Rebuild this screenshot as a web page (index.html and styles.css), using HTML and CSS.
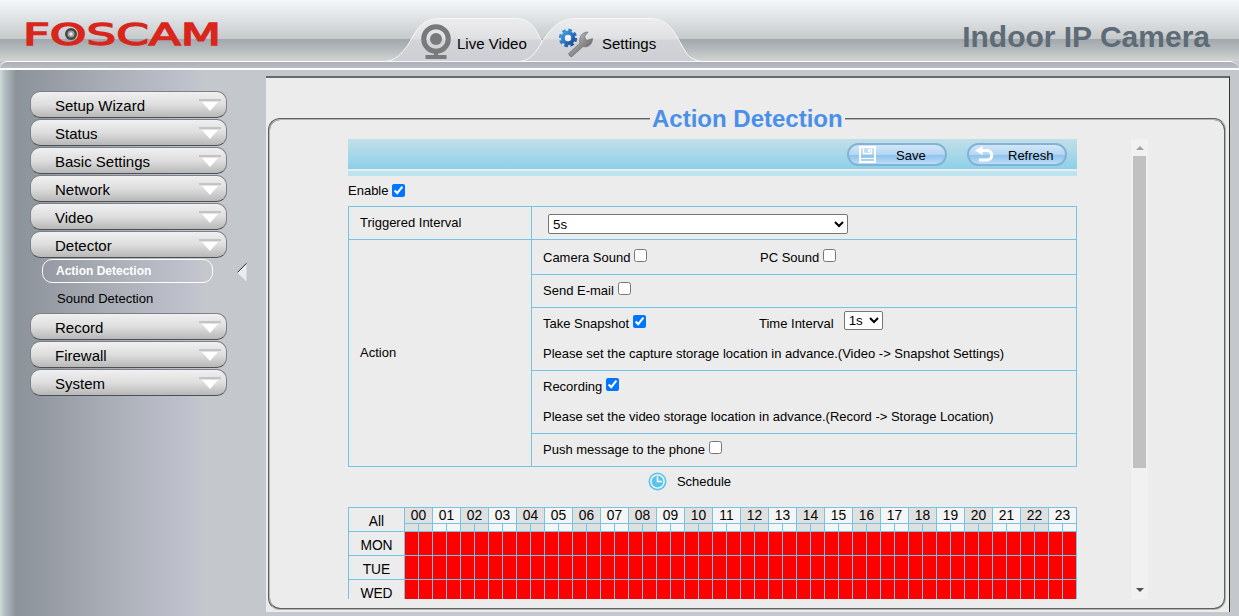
FILE: index.html
```html
<!DOCTYPE html>
<html lang="en">
<head>
<meta charset="UTF-8" />
<title>IPCam Client</title>
<link rel="stylesheet" href="styles.css">
</head>
<body>
<header class="header">
  <svg class="logo" width="210" height="42" viewBox="0 0 210 42" role="img" aria-label="FOSCAM">
    <text x="0" y="36" textLength="198" lengthAdjust="spacingAndGlyphs">FOSCAM</text>
    <circle cx="48" cy="25" r="6" fill="#444"/>
    <circle cx="48" cy="25" r="3.6" fill="#999"/>
    <circle cx="48" cy="25" r="1.8" fill="#e4e4e4"/>
  </svg>
  <nav class="tabs">
    <svg class="tab-shapes" width="320" height="44" viewBox="0 0 320 44">
      <defs>
        <linearGradient id="tabFill" x1="0" y1="0" x2="0" y2="1">
          <stop offset="0" stop-color="#ededee"/>
          <stop offset="0.47" stop-color="#dfe0e2"/>
          <stop offset="0.5" stop-color="#d2d4d8"/>
          <stop offset="1" stop-color="#cdcfd5"/>
        </linearGradient>
      </defs>
      <path d="M0 43.5C12 43 17 36 24 27C31 15 36 .5 56 .5H132C148 .5 153 14 157 22L170 43.5Z" fill="url(#tabFill)" stroke="#f5f7f8"/>
      <path d="M136 43.5C147 42 152 34 158 24C165 13 174 .5 192 .5H266C284 .5 290 13 297 26C302 35 305 42 318 43.5Z" fill="url(#tabFill)" stroke="#f5f7f8"/>
    </svg>
    <a class="tab tab-live">
      <svg width="30" height="36" viewBox="0 0 30 36">
        <circle cx="15" cy="15" r="12.3" fill="none" stroke="#77797b" stroke-width="5"/>
        <circle cx="15" cy="15" r="6" fill="#77797b"/>
        <path d="M13 28h4v3h8.500v4H4.500v-4h8.500z" fill="#77797b"/>
      </svg>
      <span>Live Video</span>
    </a>
    <a class="tab tab-settings">
      <svg width="36" height="30" viewBox="0 0 36 30">
        <defs>
          <linearGradient id="gear" x1="0" y1="0" x2="1" y2="1">
            <stop offset="0" stop-color="#3fa0e4"/>
            <stop offset="1" stop-color="#1d4c9c"/>
          </linearGradient>
          <linearGradient id="steel" x1="0" y1="0" x2="1" y2="1">
            <stop offset="0" stop-color="#d8d8d8"/>
            <stop offset="1" stop-color="#4a4a4a"/>
          </linearGradient>
        </defs>
        <circle cx="10" cy="10" r="7.700" fill="none" stroke="url(#gear)" stroke-width="3" stroke-dasharray="3.6 2.448"/>
        <circle cx="10" cy="10" r="5.2" fill="#f2f5f8" stroke="url(#gear)" stroke-width="4"/>
        <path d="M10.500 25.500L22 15C20.500 9 24 4 30 4L26.500 8.500L28.500 12.500L34.500 10.500C34.500 16 30 20 25 18.500L14 28.500Q11.500 29.500 10.500 25.500Z" fill="url(#steel)" stroke="#666" stroke-width=".6"/>
      </svg>
      <span>Settings</span>
    </a>
  </nav>
  <div class="product">Indoor IP Camera</div>
</header>
<div class="rail"></div>

<div class="body">
  <aside class="sidebar">
    <ul class="menu">
      <li class="menu-item">Setup Wizard</li>
      <li class="menu-item">Status</li>
      <li class="menu-item">Basic Settings</li>
      <li class="menu-item">Network</li>
      <li class="menu-item">Video</li>
      <li class="menu-item">Detector</li>
      <li class="submenu">
        <a class="sub-item selected">Action Detection</a>
        <a class="sub-item">Sound Detection</a>
      </li>
      <li class="menu-item">Record</li>
      <li class="menu-item">Firewall</li>
      <li class="menu-item">System</li>
    </ul>
    <svg class="pointer" width="10" height="19" viewBox="0 0 10 19">
      <path d="M9.500 0V18.500L0 9.500Z" fill="#ececec"/>
      <path d="M9.500 .3L.4 9.500" stroke="#222" fill="none"/>
    </svg>
  </aside>

  <main class="content">
    <fieldset class="panel">
      <legend>Action Detection</legend>
      <div class="scroller">
        <div class="page">
          <div class="toolbar">
            <button class="tool">
              <svg width="17" height="17" viewBox="0 0 17 17" fill="none" stroke="#fff">
                <path d="M1 1H16V16H1Z" stroke-width="2"/>
                <path d="M4.500 1.500V7.500H12.500V1.500" stroke-width="1.300"/>
                <path d="M10 3V6" stroke-width="2"/>
                <path d="M2 12.500H15" stroke-width="1"/>
              </svg>
              <span>Save</span>
            </button>
            <button class="tool refresh">
              <svg width="19" height="17" viewBox="0 0 19 17">
                <path d="M5 4.500H12A4.700 4.700 0 0 1 12 14H4" fill="none" stroke="#fff" stroke-width="3"/>
                <path d="M0 4.500L7.500 0V9Z" fill="#fff"/>
              </svg>
              <span>Refresh</span>
            </button>
          </div>
          <div class="strip"></div>
          <label class="enable">Enable <input type="checkbox" checked></label>

          <div class="settings">
            <div class="name">Triggered Interval</div>
            <div class="cell interval">
              <select class="long"><option>5s</option></select>
            </div>
            <div class="name action-name">Action</div>
            <div class="cell sound">
              <label class="left">Camera Sound <input type="checkbox"></label>
              <label>PC Sound <input type="checkbox"></label>
            </div>
            <div class="cell"><label>Send E-mail <input type="checkbox"></label></div>
            <div class="cell tall">
              <div class="line">
                <label class="left snap">Take Snapshot <input type="checkbox" checked></label>
                <span>Time Interval</span>
                <select class="short"><option>1s</option></select>
              </div>
              <div class="line">Please set the capture storage location in advance.(Video -&gt; Snapshot Settings)</div>
            </div>
            <div class="cell tall">
              <div class="line"><label>Recording <input type="checkbox" checked></label></div>
              <div class="line">Please set the video storage location in advance.(Record -&gt; Storage Location)</div>
            </div>
            <div class="cell"><label>Push message to the phone <input type="checkbox"></label></div>
          </div>

          <div class="schedule-title">
            <svg width="19" height="19" viewBox="0 0 19 19">
              <circle cx="9.500" cy="9.500" r="9" fill="#5bc4ea"/>
              <circle cx="9.500" cy="9.500" r="6.600" fill="none" stroke="#fff" stroke-width="1.300"/>
              <path d="M9.500 4.500V9.500H14" fill="none" stroke="#fff" stroke-width="1.500"/>
            </svg>
            <span>Schedule</span>
          </div>
          <div class="schedule" id="schedule"></div>
        </div>
        <div class="scrollbar">
          <i class="up"></i>
          <div class="thumb"></div>
          <i class="down"></i>
        </div>
      </div>
    </fieldset>
  </main>
</div>

<script>
  (function(){
    const schedule = document.getElementById('schedule');
    const days = ['MON', 'TUE', 'WED'];

    function add(parent, cls, text) {
      const el = document.createElement('div');
      el.className = cls;
      if (text) el.textContent = text;
      parent.appendChild(el);
      return el;
    }

    // Header: one column per hour, split in two half hours
    add(schedule, 'day', 'All');
    for (let h = 0; h < 24; h++) {
      const hour = add(schedule, 'hour');
      add(hour, 'num', String(h).padStart(2, '0'));
      add(hour, 'half');
      add(hour, 'half');
    }

    days.forEach(name => {
      add(schedule, 'day', name);
      for (let i = 0; i < 48; i++) add(schedule, 'slot');
    });
  })();
</script>
</body>
</html>
```
FILE: styles.css
```css
* {
  box-sizing: border-box;
}
body {
  margin: 0;
  height: 616px;
  overflow: hidden;
  font-family: "Liberation Sans", Arial, sans-serif;
  font-size: 13px;
  color: #000;
  background: #c4c7cb;
}

/* Header */
.header {
  height: 61px;
  display: flex;
  position: relative;
  background: linear-gradient(#f3f7f9 0, #dfe3e5 18px, #c5c9ca 39px, #a0a8ad 39px, #b4b9bb 49px, #d2d4d3 61px);
}
.logo {
  margin: 9px 0 0 23px;
}
.logo text {
  font-family: "DejaVu Sans", sans-serif;
  font-size: 31px;
  fill: #d8261c;
  stroke: #d8261c;
  stroke-width: 1.4px;
}
.tabs {
  position: relative;
  margin: 18px 0 0 151px;
  width: 320px;
  height: 43px;
}
.tab-shapes {
  position: absolute;
  left: 0;
  top: 0;
}
.tab {
  position: absolute;
  display: flex;
  align-items: center;
  font-size: 15px;
}
.tab-live {
  left: 37px;
  top: 6px;
  gap: 6px;
}
.tab-live span {
  margin-top: 2px;
}
.tab-settings {
  left: 174px;
  top: 10px;
  gap: 8px;
}
.product {
  margin: 19px 29px 0 auto;
  font-size: 30px;
  line-height: 36px;
  font-weight: bold;
  color: #5e6b76;
}
.rail {
  height: 9px;
  border-top: 1px solid #fff;
  border-bottom: 2px solid #fff;
  background: linear-gradient(#abb0b8, #b9bdc3);
  border-radius: 10px 12px 0 0;
}

/* Sidebar */
.body {
  display: flex;
  height: 546px;
  background: linear-gradient(90deg, #cfdbda 0, #b2bcc1 5px, #8b9399 16px, #979ba4 50px, #abafb8 115px, #bfc2cc 190px, #c4c7cb 205px);
}
.sidebar {
  position: relative;
  width: 266px;
  padding: 21px 0 0 30px;
}
.menu {
  list-style: none;
  margin: 0;
  padding: 0;
  width: 197px;
}
.menu-item {
  position: relative;
  height: 27px;
  margin-bottom: 1px;
  padding-left: 24px;
  border: 1px solid #7d8085;
  border-bottom-color: #4c4f53;
  border-radius: 10px;
  background: linear-gradient(#f0f0f0, #dedede 50%, #b8b8b8);
  font-size: 15px;
  line-height: 27px;
}
.menu-item::before {
  content: "";
  position: absolute;
  right: 5px;
  top: 7px;
  width: 22px;
  height: 2px;
  background: #c4c4c4;
}
.menu-item::after {
  content: "";
  position: absolute;
  right: 8px;
  top: 10px;
  border: 8px solid transparent;
  border-top: 9px solid #fff;
  border-bottom: 0;
}
.submenu {
  height: 54px;
  padding: 0 0 0 12px;
}
.sub-item {
  display: block;
  height: 24px;
  width: 171px;
  padding-left: 15px;
  line-height: 25px;
}
.sub-item.selected {
  margin-bottom: 3px;
  padding-left: 13px;
  border: 1px solid #fff;
  border-radius: 10px;
  color: #fff;
  font-size: 12px;
  font-weight: bold;
  line-height: 23px;
}
.pointer {
  position: absolute;
  left: 237px;
  top: 193px;
}

/* Content */
.content {
  width: 964px;
  height: 536px;
  margin-top: 6px;
  padding: 27px 3px 0 2px;
  background: #ececec;
  border-top: 2px solid #66696a;
  border-right: 1px solid #333;
}
.panel {
  height: 505px;
  margin: 0;
  padding: 0 0 0 78px;
  border: 2px groove #b4b4b4;
  border-radius: 12px;
}
legend {
  margin-left: 302px;
  padding: 0 2px;
  font-size: 24px;
  line-height: 28px;
  font-weight: bold;
  color: #4a90e8;
}
.scroller {
  display: flex;
  height: 460px;
  margin-top: 6px;
  overflow: hidden;
}
.page {
  width: 729px;
}
.toolbar {
  display: flex;
  justify-content: flex-end;
  gap: 20px;
  height: 30px;
  padding: 4px 10px 0 0;
  background: linear-gradient(#c2dfe8, #a8d8e8 50%, #8cd0e8);
}
.tool {
  display: flex;
  align-items: center;
  width: 100px;
  height: 23px;
  padding: 0 0 1px 10px;
  border: 2px solid #82b3d6;
  border-radius: 12px;
  background: linear-gradient(#d2e6f6, #b4d6f2 50%, #8cc2ee 52%, #bcdcf6);
  font: 13px "Liberation Sans", Arial, sans-serif;
  color: #000;
}
.tool span {
  margin: 2px 0 0 20px;
}
.tool.refresh {
  padding-left: 6px;
}
.tool.refresh span {
  margin-left: 14px;
}
.strip {
  height: 5px;
  margin-top: 2px;
  background: #bce4f0;
}
.enable {
  display: flex;
  align-items: center;
  gap: 4px;
  height: 30px;
  padding-bottom: 1px;
}
input {
  width: 13px;
  height: 13px;
  margin: 0;
}
select {
  padding: 0;
  border: 1px solid #767676;
  border-radius: 2px;
  background: #fff;
  font: 13.333px "Liberation Sans", Arial, sans-serif;
  color: #000;
}

.settings {
  display: grid;
  grid-template-columns: 183px 545px;
  grid-template-rows: 33px 35px 33px 63px 63px 33px;
  width: 729px;
  border: solid #72c5e4;
  border-width: 1px 0 0 1px;
}
.name,
.cell {
  border: solid #72c5e4;
  border-width: 0 1px 1px 0;
  padding: 0 0 2px 11px;
}
.name {
  display: flex;
  align-items: center;
}
.action-name {
  grid-row: 2 / 7;
}
.cell,
.line {
  display: flex;
  align-items: center;
}
.cell.interval,
.cell.sound {
  padding-bottom: 0;
}
.cell label {
  display: flex;
  gap: 4px;
}
.cell input {
  position: relative;
  top: -1px;
}
.left {
  width: 217px;
}
.cell .snap {
  width: 216px;
}
.cell.tall {
  display: block;
}
.line {
  height: 30px;
}
.long {
  width: 300px;
  height: 20px;
  margin: 2px 0 0 5px;
}
.short {
  width: 39px;
  height: 19px;
  margin: -5px 0 0 10px;
}

.schedule-title {
  display: flex;
  align-items: center;
  justify-content: center;
  gap: 10px;
  height: 28px;
  margin-bottom: 12px;
  padding-right: 46px;
}
.schedule {
  display: grid;
  grid-template-columns: 56px repeat(48, 14px);
  grid-auto-rows: 24px;
  width: 729px;
  border: solid #72c5e4;
  border-width: 1px 0 0 1px;
  font-size: 13.8px;
}
.day,
.slot,
.num,
.half {
  border: solid #72c5e4;
  border-width: 0 1px 1px 0;
}
.day {
  padding-top: 5px;
  line-height: 18px;
  text-align: center;
}
.hour {
  grid-column: span 2;
  display: grid;
  grid-template: 16px 8px / 14px 14px;
  background: #f5f5f5;
}
.hour:nth-child(even) {
  background: #e0e0e0;
}
.num {
  grid-column: span 2;
  line-height: 15px;
  text-align: center;
}
.slot {
  background: #f00;
}

/* Scrollbar */
.scrollbar {
  display: flex;
  flex-direction: column;
  align-items: center;
  width: 17px;
  margin-left: 54px;
  background: #f1f1f1;
}
.up,
.down {
  border: 4px solid transparent;
}
.up {
  margin: 7px 0 6px;
  border-top: 0;
  border-bottom-color: #a3a3a3;
}
.thumb {
  width: 13px;
  height: 312px;
  background: #c1c1c1;
}
.down {
  margin: auto 0 7px;
  border-bottom: 0;
  border-top-color: #505050;
}
```
